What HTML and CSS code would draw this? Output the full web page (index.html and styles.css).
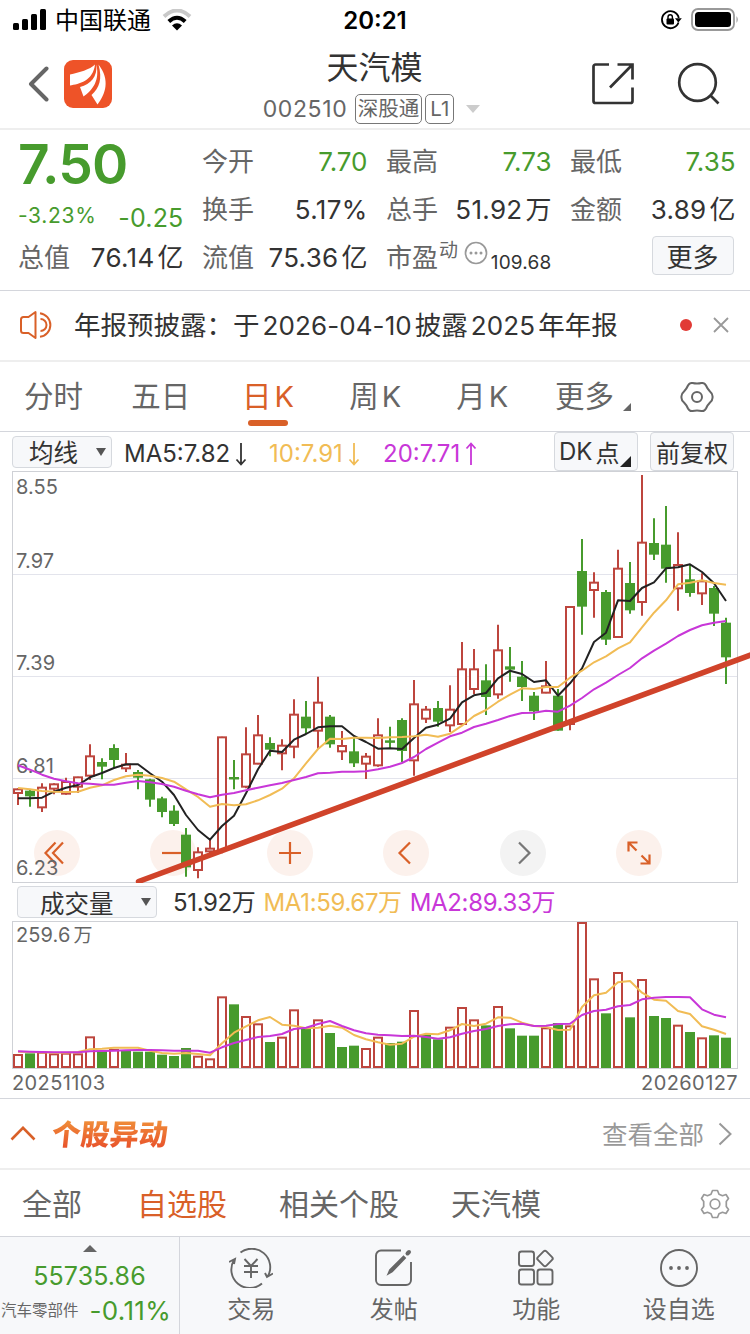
FILE: index.html
```html
<!DOCTYPE html>
<html lang="zh-CN">
<head>
    <meta charset="UTF-8">
    <meta name="viewport" content="width=device-width, initial-scale=1.0">
    <title>天汽模 002510</title>
    <link rel="stylesheet" href="styles.css">
</head>
<body>

    <!-- Status Bar -->
    <div class="status-bar">
        <div class="status-left">
            <svg width="34" height="22" viewBox="0 0 34 22">
                <rect x="0" y="14" width="6" height="7" rx="1.5"/>
                <rect x="9" y="10" width="6" height="11" rx="1.5"/>
                <rect x="18" y="5" width="6" height="16" rx="1.5"/>
                <rect x="27" y="0" width="6" height="21" rx="1.5"/>
            </svg>
            <span class="carrier">中国联通</span>
            <svg class="wifi" width="30" height="22" viewBox="0 0 30 22">
                <path d="M2 7.5Q15-4.500 28 7.500" fill="none" stroke="#c9c9c9" stroke-width="4"/>
                <path d="M6.800 12.500Q15 5 23.200 12.500" fill="none" stroke="#000" stroke-width="4"/>
                <path d="M10 16.500Q15 12 20 16.500L15 21.500Z"/>
            </svg>
        </div>
        <div class="clock">20:21</div>
        <div class="status-right">
            <svg width="21" height="20" viewBox="0 0 21 20">
                <path d="M17.500 12.500A8.500 8.500 0 1 1 17.800 8" fill="none" stroke="#000" stroke-width="1.800"/>
                <path d="M14 8.300H20.800L17.300 12.500Z"/>
                <rect x="5.500" y="8.500" width="7.500" height="6" rx="1"/>
                <path d="M7 9V7a2.200 2.200 0 0 1 4.400 0V9" fill="none" stroke="#000" stroke-width="1.400"/>
            </svg>
            <svg width="49" height="24" viewBox="0 0 49 24">
                <rect x="1" y="1" width="42" height="21" rx="6" fill="none" stroke="#999" stroke-width="1.800"/>
                <rect x="4" y="4" width="36" height="15" rx="3.500"/>
                <path d="M45.500 8q2.500 3.500 0 7z" fill="#999"/>
            </svg>
        </div>
    </div>

    <!-- Header -->
    <header class="header">
        <div class="header-left">
            <svg width="22" height="36" viewBox="0 0 22 36" fill="none" stroke="#666" stroke-width="4" stroke-linecap="round" stroke-linejoin="round">
                <path d="M18.500 2.500L3 18 18.500 33.500"/>
            </svg>
            <svg class="logo" width="48" height="48" viewBox="0 0 48 48">
                <rect width="48" height="48" rx="9" fill="#ee5328"/>
                <path d="M31 4.500C26 9.500 15 12.500 6 14.500V25.500C15 24 29 21 31 4.500Z" fill="#fff"/>
                <path d="M32.300 4.500C33.500 17 27 24 16 27L19.500 36.500C29 30 36 20 32.300 4.500Z" fill="#fff"/>
                <path d="M34.500 4.500C38.500 19 35.500 28 27.500 35L33.500 44.500C41.500 34 46.500 20 34.500 4.500Z" fill="#fff"/>
            </svg>
        </div>
        <div class="header-title">
            <h1>天汽模</h1>
            <div class="header-sub">
                <span class="code">002510</span>
                <span class="badge badge-wide">深股通</span>
                <span class="badge">L1</span>
                <span class="arrow-down"></span>
            </div>
        </div>
        <div class="header-right">
            <svg width="44" height="44" viewBox="0 0 44 44" fill="none" stroke="#333" stroke-width="2.700">
                <path d="M18 2.500H4.500a2 2 0 0 0-2 2V39a2 2 0 0 0 2 2H39.500a2 2 0 0 0 2-2V25.500"/>
                <path d="M26.500 2.500H41.500V17.500M41 3L19 25.500"/>
            </svg>
            <svg width="44" height="44" viewBox="0 0 44 44" fill="none" stroke="#333" stroke-width="2.700">
                <circle cx="20.500" cy="20.500" r="18.300"/>
                <path d="M33.500 33.500L41.500 41.500"/>
            </svg>
        </div>
    </header>

    <!-- Quote -->
    <section class="quote">
        <div class="price-box">
            <div class="price">7.50</div>
            <div class="change"><span class="percent">-3.23%</span><span class="diff">-0.25</span></div>
        </div>
        <div class="item"><label>今开</label><b class="green">7.70</b></div>
        <div class="item"><label>最高</label><b class="green">7.73</b></div>
        <div class="item"><label>最低</label><b class="green">7.35</b></div>
        <div class="item"><label>换手</label><b>5.17%</b></div>
        <div class="item"><label>总手</label><b>51.92<i>万</i></b></div>
        <div class="item"><label>金额</label><b>3.89<i>亿</i></b></div>
        <div class="item"><label>总值</label><b>76.14<i>亿</i></b></div>
        <div class="item"><label>流值</label><b>75.36<i>亿</i></b></div>
        <div class="item pe">
            <label>市盈</label><small>动</small>
            <svg width="24" height="24" viewBox="-12 -12 24 24">
                <circle r="10.500" fill="none" stroke="#999" stroke-width="1.700"/>
                <g fill="#999"><circle cx="-5" r="1.500"/><circle r="1.500"/><circle cx="5" r="1.500"/></g>
            </svg>
            <b>109.68</b>
        </div>
        <div class="item more-cell"><button class="more">更多</button></div>
    </section>

    <!-- Notice -->
    <section class="notice">
        <svg width="34" height="30" viewBox="0 0 34 30" fill="none" stroke="#d96028" stroke-width="2" stroke-linejoin="round">
            <path d="M16.500 2V28L9.500 23H4.500q-2.500 0-2.500-2.500V9.500q0-2.500 2.500-2.500H9.500Z"/>
            <path d="M21.500 9a6 6 0 0 1 0 12M21 3.200a11.900 11.900 0 0 1 0 23.600"/>
        </svg>
        <p>年报预披露：<span>于</span><em>2026-04-10</em>披露<em>2025</em>年年报</p>
        <span class="dot"></span>
        <svg width="16" height="16" viewBox="0 0 16 16" stroke="#999" stroke-width="1.800"><path d="M1 1L15 15M15 1L1 15"/></svg>
    </section>

    <!-- Period Tabs -->
    <nav class="period-tabs">
        <a>分时</a>
        <a>五日</a>
        <a class="active">日<em>K</em></a>
        <a>周<em>K</em></a>
        <a>月<em>K</em></a>
        <a class="more-tab">更多<span class="corner"></span></a>
        <a>
            <svg width="34" height="34" viewBox="-17 -17 34 34" fill="none" stroke="#666" stroke-width="2" stroke-linejoin="round">
                <path d="M-4.500-14Q0-13 4.500-14Q7.500-14.500 9-11.500Q10.500-8 13-5.500Q16-3 15.500 0Q16 3 13 5.500Q10.500 8 9 11.500Q7.500 14.500 4.500 14Q0 13-4.500 14Q-7.500 14.500-9 11.500Q-10.500 8-13 5.500Q-16 3-15.500 0Q-16-3-13-5.500Q-10.500-8-9-11.500Q-7.500-14.500-4.500-14Z"/>
                <circle r="5"/>
            </svg>
        </a>
    </nav>

    <!-- Moving Averages -->
    <div class="ma-bar">
        <button class="select">均线<span class="caret"></span></button>
        <span class="ma ma5">MA5:7.82<svg width="12" height="24" viewBox="0 0 12 24"><path d="M6 1V22.500M1.500 17.500L6 22.500 10.500 17.500"/></svg></span>
        <span class="ma ma10">10:7.91<svg width="12" height="24" viewBox="0 0 12 24"><path d="M6 1V22.500M1.500 17.500L6 22.500 10.500 17.500"/></svg></span>
        <span class="ma ma20">20:7.71<svg width="12" height="24" viewBox="0 0 12 24"><path d="M6 23V1.500M1.500 6.500L6 1.500 10.500 6.500"/></svg></span>
        <button class="dk">DK<i>点</i><span class="corner dark"></span></button>
        <button class="fq">前复权</button>
    </div>

    <!-- Candle Chart -->
    <div class="chart">
        <div class="controls">
            <span><svg viewBox="-23 -23 46 46"><path d="M-1.500-10.500L-11.500 0-1.500 10.500M6-10.500L-4 0 6 10.500"/></svg></span>
            <span><svg viewBox="-23 -23 46 46"><path d="M-11 0H11"/></svg></span>
            <span><svg viewBox="-23 -23 46 46"><path d="M-11 0H11M0-11V11"/></svg></span>
            <span><svg viewBox="-23 -23 46 46"><path d="M4-10.500L-6.500 0 4 10.500"/></svg></span>
            <span class="off"><svg viewBox="-23 -23 46 46"><path d="M-4-10.500L6.500 0-4 10.500"/></svg></span>
            <span><svg viewBox="-23 -23 46 46"><path d="M-10.500-1.500V-10.500H-1.500M-10.500-10.500L-2.500-2.500M10.500 1.500V10.500H1.500M10.500 10.500L2.500 2.500"/></svg></span>
        </div>
        <svg id="candles" width="750" height="412"></svg>
    </div>

    <!-- Volume Chart -->
    <div class="vol-bar">
        <button class="select">成交量<span class="caret"></span></button>
        <span class="vol">51.92万</span>
        <span class="vol ma10">MA1:59.67万</span>
        <span class="vol ma20">MA2:89.33万</span>
    </div>
    <svg id="volume" width="750" height="148"></svg>
    <div class="dates"><span>20251103</span><span>20260127</span></div>

    <!-- Stock Moves -->
    <section class="moves">
        <svg width="26" height="16" viewBox="0 0 26 16" fill="none" stroke="#d96028" stroke-width="2.600"><path d="M1.500 13.500L13 1.800 24.500 13.500"/></svg>
        <h2>个股异动</h2>
        <a>查看全部</a>
        <svg width="14" height="24" viewBox="0 0 14 24" fill="none" stroke="#999" stroke-width="2"><path d="M1.500 1.500L12.500 12 1.500 22.500"/></svg>
    </section>
    <nav class="move-tabs">
        <a>全部</a>
        <a class="active">自选股</a>
        <a>相关个股</a>
        <a>天汽模</a>
        <svg width="30" height="30" viewBox="-15 -15 30 30" fill="none" stroke="#999" stroke-width="1.700" stroke-linejoin="round">
            <path d="M-2.500-13.500H2.500L4-9.800 7.500-8.300 11-9.500 13.500-5.500 11.300-2.500V2.500L13.500 5.500 11 9.500 7.500 8.300 4 9.800 2.500 13.500H-2.500L-4 9.800-7.500 8.300-11 9.500-13.500 5.500-11.300 2.500V-2.500L-13.500-5.500-11-9.500-7.500-8.300-4-9.800Z"/>
            <circle r="4.800"/>
        </svg>
    </nav>

    <!-- Bottom Bar -->
    <footer class="bottom-bar">
        <div class="index">
            <span class="arrow-up"></span>
            <div class="index-value">55735.86</div>
            <div class="index-row"><span>汽车零部件</span><b>-0.11%</b></div>
        </div>
        <a>
            <svg width="44" height="40" viewBox="-22 -20 44 40" fill="none" stroke="#666" stroke-width="1.900">
                <path d="M-10.500-15.500A18.500 18.500 0 0 1 17 8M22 5.500L16 9 14 5M11 15.500A18.500 18.500 0 0 1-17-8M-22-6L-16-9-17-4"/>
                <path d="M-6.500-9L0-2 6.500-9M0-2V10M-7-2H7M-7 4H7"/>
            </svg>
            交易
        </a>
        <a>
            <svg width="40" height="40" viewBox="0 0 40 40" fill="none" stroke="#666" stroke-width="1.900">
                <path d="M27 2.500H7a5 5 0 0 0-5 5V32a5 5 0 0 0 5 5H32a5 5 0 0 0 5-5V14"/>
                <path d="M14.500 25.500L16 22 29.500 8.500 31 10 18 23.500Z" fill="#666"/>
                <path d="M33.500 5.500L35 4" stroke-width="4" stroke-linecap="round"/>
            </svg>
            发帖
        </a>
        <a>
            <svg width="38" height="40" viewBox="0 0 38 40" fill="none" stroke="#666" stroke-width="1.900">
                <rect x="2" y="3.500" width="15" height="14.500" rx="2.500"/>
                <rect x="2" y="21.500" width="15" height="15" rx="2.500"/>
                <rect x="20.500" y="21.500" width="15" height="15" rx="2.500"/>
                <rect x="22" y="4.500" width="12" height="12" rx="2" transform="rotate(45 28 10.500)"/>
            </svg>
            功能
        </a>
        <a>
            <svg width="40" height="40" viewBox="-20 -20 40 40">
                <circle r="18" fill="none" stroke="#666" stroke-width="1.900"/>
                <g fill="#666"><circle cx="-8" r="1.900"/><circle r="1.900"/><circle cx="8" r="1.900"/></g>
            </svg>
            设自选
        </a>
    </footer>

    <script src="chart.js"></script>
</body>
</html>
```
FILE: styles.css
```css
/* Body Styling */
* {
    box-sizing: border-box;
}

body {
    margin: 0;
    width: 750px;
    height: 1334px;
    overflow: hidden;
    background-color: #fff;
    color: #333;
    font-family: Inter, "Noto Sans CJK SC", sans-serif;
    font-weight: 400;
    line-height: 1;
}

h1, h2, p {
    margin: 0;
    font-weight: inherit;
}

b, i, em {
    font-weight: inherit;
    font-style: normal;
}

button {
    display: flex;
    align-items: center;
    padding: 0;
    font-family: inherit;
    font-weight: inherit;
    color: #333;
    background-color: #f7f8fa;
    border: 1px solid #d6d9de;
    border-radius: 4px;
}

svg {
    display: block;
    flex: none;
}

a, span, label, b {
    white-space: nowrap;
}

.green {
    color: #479b2d;
}

/* Status Bar */
.status-bar {
    display: grid;
    grid-template-columns: 1fr auto 1fr;
    align-items: center;
    height: 40px;
    padding: 0 10px 0 13px;
    color: #000;
}

.status-left {
    display: flex;
    align-items: center;
}

.carrier {
    margin-left: 8px;
    padding-top: 2px;
    font-size: 24px;
}

.wifi {
    margin-left: 11px;
}

.clock {
    padding: 2px 3px 0 0;
    font-size: 24px;
    font-weight: 600;
}

.status-right {
    display: flex;
    justify-content: flex-end;
    align-items: center;
    gap: 9px;
}

/* Header */
.header {
    display: grid;
    grid-template-columns: 1fr auto 1fr;
    height: 90px;
    padding: 0 29px 0 28px;
    border-bottom: 2px solid #eee;
}

.header-left {
    display: flex;
    align-items: center;
    gap: 14px;
    height: 88px;
}

.header-title h1 {
    margin-top: 12px;
    text-align: center;
    font-size: 32px;
}

.header-sub {
    display: flex;
    align-items: center;
    height: 30px;
    margin: 10px 3px 0 -3px;
    color: #666;
}

.code {
    width: 86px;
    font-size: 23px;
    letter-spacing: 0.6px;
}

.badge {
    height: 30px;
    margin-left: 3px;
    padding: 0 2px;
    border: 1px solid #777;
    border-radius: 5px;
    font-size: 20.500px;
    line-height: 28px;
}

.badge:not(.badge-wide) {
    width: 29px;
    text-align: center;
}

.badge-wide {
    margin-left: 6px;
}

.arrow-down {
    margin-left: 12px;
    border: 7px solid transparent;
    border-top: 8px solid #ccc;
    border-bottom: 0;
}

.header-right {
    display: flex;
    align-items: center;
    justify-content: flex-end;
    gap: 42px;
    height: 88px;
}

/* Quote */
.quote {
    display: grid;
    grid-template-columns: repeat(4, 165.500px);
    grid-template-rows: repeat(3, 48px);
    column-gap: 18.500px;
    height: 161px;
    padding: 8px 0 0 18px;
    border-bottom: 1px solid #d4d6dc;
}

.price-box {
    grid-row: span 2;
    color: #479b2d;
}

.price {
    margin-top: -1px;
    font-size: 55px;
    font-weight: 600;
    letter-spacing: -0.8px;
}

.change {
    display: flex;
    justify-content: space-between;
    align-items: flex-end;
    margin-top: 8px;
}

.percent {
    font-size: 21px;
    line-height: 31px;
    letter-spacing: 0.7px;
}

.diff {
    font-size: 25px;
    letter-spacing: 0.2px;
}

.item {
    display: flex;
    justify-content: space-between;
    align-items: center;
}

.item label {
    font-size: 26px;
    color: #666;
}

.item b {
    font-size: 26px;
    letter-spacing: 0.3px;
}

.item b i {
    margin-left: 3px;
    font-size: 26px;
    letter-spacing: 0;
}

.item .green {
    letter-spacing: 0;
}

.pe small {
    margin: -16px 0 0 1px;
    font-size: 19px;
    color: #666;
}

.pe svg {
    margin: -11px 0 0 6px;
}

.pe b {
    margin: 9px 0 0 auto;
    font-size: 19px;
    letter-spacing: 0.2px;
}

.more-cell {
    justify-content: flex-end;
}

.more {
    justify-content: center;
    width: 82px;
    height: 39px;
    margin: -5px 2px 0 0;
    font-size: 26px;
}

/* Notice */
.notice {
    display: flex;
    align-items: center;
    height: 71px;
    padding: 0 21px 2px 19px;
    border-bottom: 2px solid #eee;
}

.notice p {
    flex: 1;
    margin-left: 21px;
    padding-top: 1px;
    font-size: 26.500px;
    white-space: nowrap;
}

.notice em {
    margin: 0 3px;
    font-size: 26px;
    letter-spacing: 0.1px;
}

.dot {
    width: 12px;
    height: 12px;
    margin-right: 21px;
    border-radius: 50%;
    background-color: #e13a35;
}

/* Period Tabs */
.period-tabs {
    display: grid;
    grid-template-columns: repeat(7, 107.200px);
    height: 70px;
    border-bottom: 1px solid #d4d6dc;
}

.period-tabs a {
    position: relative;
    display: flex;
    align-items: center;
    justify-content: center;
    font-size: 29.500px;
    color: #666;
}

.period-tabs em {
    margin-left: 3px;
    font-size: 29px;
}

.period-tabs .active {
    color: #d96028;
}

.period-tabs .active::after {
    content: "";
    position: absolute;
    bottom: 5px;
    width: 40px;
    height: 6px;
    border-radius: 3px;
    background-color: #d96028;
}

.period-tabs .more-tab {
    padding-left: 7px;
}

.corner {
    align-self: flex-end;
    margin: 0 0 20px 9px;
    border-left: 8px solid transparent;
    border-bottom: 8px solid #666;
}

/* Moving Averages */
.ma-bar {
    display: flex;
    align-items: center;
    height: 39px;
    padding: 0 16px 0 12px;
}

.select {
    justify-content: space-between;
    width: 100px;
    height: 32px;
    padding: 0 5px 0 16px;
    font-size: 24.500px;
}

.caret {
    border: 5px solid transparent;
    border-top: 8px solid #555;
    border-bottom: 0;
}

.ma {
    display: flex;
    align-items: center;
    gap: 5px;
    font-size: 24px;
    padding-top: 4px;
}

.ma path {
    fill: none;
    stroke: currentColor;
    stroke-width: 1.800;
}

.ma5 {
    width: 145px;
    margin-left: 12px;
}

.ma10 {
    color: #f1bc55;
}

.ma.ma10 {
    width: 114px;
}

.ma20 {
    color: #c837d8;
}

.dk,
.fq {
    justify-content: center;
    height: 39px;
    width: 84px;
    font-size: 24px;
}

.dk {
    justify-content: flex-start;
    margin-left: auto;
    padding-left: 4px;
}

.dk i {
    margin-left: 3px;
}

.corner.dark {
    margin: 0 0 3px 1px;
    border-left-width: 11px;
    border-bottom: 11px solid #222;
}

.fq {
    margin-left: 12px;
}

/* Charts */
.chart {
    position: relative;
    height: 412px;
}

.controls {
    position: absolute;
    left: 34px;
    bottom: 7px;
    display: flex;
    gap: 70.400px;
}

.controls span {
    width: 46px;
    height: 46px;
    border-radius: 50%;
    background-color: #fcf1ec;
}

.controls path {
    fill: none;
    stroke: #d96028;
    stroke-width: 2.200;
}

.controls .off {
    background-color: #f3f3f3;
}

.controls .off path {
    stroke: #777;
}

#candles {
    position: relative;
}

.frame {
    fill: none;
    stroke: #cfd1d6;
}

.grid {
    stroke: #e3e4ec;
}

.axis {
    font-size: 20px;
    letter-spacing: 0.1px;
    fill: #666;
}

.up {
    fill: #fff;
    stroke: #bd453d;
    stroke-width: 2;
}

.down {
    fill: #479b2d;
    stroke: #479b2d;
    stroke-width: 2;
}

.line {
    fill: none;
    stroke-width: 2;
    stroke-linejoin: round;
}

.trend {
    stroke: #d0432a;
    stroke-width: 5.500;
    stroke-linecap: round;
}

.vol-bar {
    display: flex;
    align-items: center;
    height: 38px;
    padding-left: 17px;
}

.vol-bar .select {
    width: 140px;
    padding-left: 22px;
}

.vol {
    margin-left: 8px;
    padding-top: 1px;
    font-size: 24px;
    letter-spacing: -0.350px;
}

.select + .vol {
    margin-left: 16px;
}

.dates {
    display: flex;
    justify-content: space-between;
    height: 30px;
    padding: 4px 12px 0 12px;
    border-bottom: 1px solid #d4d6dc;
    font-size: 20px;
    letter-spacing: 0.4px;
    color: #666;
}

/* Stock Moves */
.moves {
    display: flex;
    align-items: center;
    height: 71px;
    padding: 0 18px 0 10px;
    border-bottom: 2px solid #eee;
}

.moves h2 {
    margin-left: 16px;
    padding-top: 1px;
    font-size: 29px;
    font-weight: 900;
    color: transparent;
    background: linear-gradient(#f0913a, #e8502a);
    -webkit-background-clip: text;
    background-clip: text;
    transform: skewX(-6deg);
}

.moves a {
    margin: 0 14px 0 auto;
    padding-top: 2px;
    font-size: 25.500px;
    color: #999;
}

.move-tabs {
    display: flex;
    align-items: center;
    gap: 52px;
    height: 67px;
    padding: 2px 20px 0 22px;
    border-bottom: 1px solid #d4d6dc;
    font-size: 30px;
    color: #666;
}

.move-tabs .active {
    margin-left: 3px;
    color: #d96028;
}

.move-tabs svg {
    margin-left: auto;
}

/* Bottom Bar */
.bottom-bar {
    display: flex;
    height: 97px;
    background-color: #f7f8fa;
}

.index {
    width: 180px;
    border-right: 1px solid #d4d6dc;
    color: #479b2d;
    text-align: center;
}

.arrow-up {
    display: block;
    width: 14px;
    margin: 8px auto 0;
    border: 7px solid transparent;
    border-bottom: 7px solid #666;
    border-top: 0;
}

.index-value {
    margin-top: 12px;
    font-size: 25px;
    letter-spacing: 0.1px;
}

.index-row {
    display: flex;
    align-items: center;
    justify-content: space-between;
    margin-top: 9px;
    padding: 0 8px 0 1px;
}

.index-row span {
    font-size: 15.500px;
    color: #666;
}

.index-row b {
    font-size: 26px;
    letter-spacing: 0.3px;
}

.bottom-bar a {
    flex: 1;
    display: flex;
    flex-direction: column;
    align-items: center;
    gap: 10px;
    padding-top: 11px;
    font-size: 24px;
    color: #666;
}
```
FILE: chart.js
```js
// All y values are in thirds of a pixel, one entry per trading day.
// Candles: [rising, high, body top, body bottom, low]
const candles = [
    [1,1075,1078,1089,1125],[0,1080,1082,1099,1130],[1,1060,1073,1132,1146],[1,1060,1063,1076,1093],
    [1,1043,1056,1091,1094],[1,1040,1042,1070,1089],[1,943,979,1037,1050],[0,985,996,1010,1048],
    [0,943,954,990,1013],[1,969,1004,1015,1026],[0,1020,1026,1043,1078],[0,1046,1048,1109,1130],
    [0,1100,1105,1146,1162],[0,1126,1142,1182,1188],[0,1194,1214,1312,1340],[1,1252,1267,1320,1345],
    [1,1230,1256,1264,1272],[1,920,922,1260,1270],[0,990,1041,1045,1078],[1,892,973,1070,1075],
    [1,855,916,1001,1003],[0,922,939,959,979],[1,928,947,970,1021],[1,808,854,950,985],
    [0,813,860,895,912],[1,740,818,902,956],[0,855,860,943,953],[1,903,948,964,990],
    [0,920,964,1000,1011],[1,969,980,1001,1047],[1,865,916,1006,1010],[0,890,931,935,955],
    [0,865,870,963,996],[1,750,823,991,1037],[1,828,839,866,879],[0,813,834,875,890],
    [1,766,839,886,906],[1,636,718,882,884],[1,657,718,777,793],[0,703,751,801,855],
    [1,584,661,793,806],[0,651,709,719,755],[0,693,740,771,813],[0,786,797,844,870],
    [1,693,769,788,790],[0,777,797,902,902],[1,530,531,882,901],[0,327,423,530,614],
    [1,427,458,480,563],[0,480,486,629,645],[1,359,416,621,623],[0,396,459,541,551],
    [1,135,338,516,557],[0,265,339,374,390],[0,228,344,416,458],[1,307,405,475,542],
    [0,405,448,489,500],[1,430,454,490,525],[0,468,474,551,588],[0,563,578,682,762]
];
const ma5 = [1105,1105,1103,1085,1073,1065,1042,1029,1014,1003,1003,1030,1055,1095,1155,1200,1229,1188,1157,1090,1018,962,966,929,912,892,889,889,918,936,956,955,957,924,893,884,866,817,796,789,745,722,732,756,751,797,760,715,636,608,511,513,474,457,415,412,403,426,460,513];
const ma10 = [1074,1078,1083,1085,1086,1085,1073,1066,1050,1039,1034,1037,1044,1055,1078,1101,1130,1122,1126,1123,1111,1095,1076,1045,1000,957,926,927,923,923,924,922,921,919,914,920,911,887,858,840,815,794,775,777,771,771,743,722,697,679,655,637,592,548,511,463,458,451,459,464];
const ma20 = [1006,1019,1034,1046,1054,1060,1061,1064,1064,1058,1053,1057,1062,1070,1082,1093,1102,1094,1089,1081,1073,1066,1059,1050,1041,1030,1028,1025,1025,1024,1018,1010,999,981,957,938,919,908,891,881,870,858,849,848,842,845,827,804,778,758,735,714,685,662,641,618,600,586,578,573];

// Volume: [rising, bar top]
const volumes = [
    [1,507],[0,505],[1,500],[1,505],[1,503],[1,505],[1,454],[0,498],[1,492],[0,497],
    [0,500],[0,500],[0,509],[0,513],[0,489],[1,512],[1,520],[1,334],[0,358],[1,393],
    [1,415],[0,471],[1,455],[1,373],[0,429],[1,403],[0,444],[0,486],[0,482],[1,489],
    [1,455],[0,474],[0,470],[1,375],[0,450],[0,463],[1,425],[1,366],[1,403],[0,421],
    [1,363],[0,430],[0,452],[0,452],[1,427],[0,414],[1,421],[1,111],[1,280],[0,385],
    [1,261],[0,397],[1,282],[0,393],[0,399],[1,419],[0,441],[1,457],[0,451],[0,458]
];
const volMa1 = [500,501,502,503,503,501,493,491,488,488,488,497,504,506,504,507,511,475,443,424,406,396,419,422,430,428,422,428,450,463,472,479,476,455,446,448,436,417,423,416,397,398,413,423,426,435,434,366,331,323,292,288,323,344,347,378,387,424,434,447];
const volMa2 = [499,500,501,502,502,502,499,498,497,496,495,495,496,497,497,497,503,487,474,465,456,453,447,432,428,417,408,423,436,445,449,451,453,452,456,461,457,446,438,432,423,418,416,423,422,417,416,390,378,374,364,360,343,338,336,336,337,373,389,397];

const dayX = i => 18 + i * 12;

function box(rising, x, top, bottom) {
    const height = Math.max(bottom - top, 0.5);
    return `<rect class="${rising ? 'up' : 'down'}" x="${x - 4}" y="${top}" width="8" height="${height}"/>`;
}

function line(values, y, color) {
    const points = values.map((v, i) => `${dayX(i)},${y(v).toFixed(1)}`).join(' ');
    return `<polyline class="line" stroke="${color}" points="${points}"/>`;
}

function drawCandles() {
    const y = v => (v - 123) / 3;
    let out = '<rect class="frame" x="12.5" y="0.5" width="725" height="411"/>';
    [103.5, 205.5, 307.5].forEach(g => {
        out += `<path class="grid" d="M13 ${g}H737"/>`;
    });
    [['8.55', 23], ['7.97', 97], ['7.39', 199], ['6.81', 302], ['6.23', 404]].forEach(([text, pos]) => {
        out += `<text class="axis" x="16" y="${pos}">${text}</text>`;
    });
    candles.forEach(([rising, high, top, bottom, low], i) => {
        const x = dayX(i);
        out += `<path class="${rising ? 'up' : 'down'}" d="M${x} ${y(high)}V${y(low)}"/>`;
        out += rising ? box(1, x, y(top), y(bottom)) : box(0, x, y(top) + 1, y(bottom) - 1);
    });
    out += line(ma5, y, '#222') + line(ma10, y, '#f1bc55') + line(ma20, y, '#c837d8');
    out += '<path class="trend" d="M138.500 410.500L752 183.500"/>';
    document.getElementById('candles').innerHTML = out;
}

function drawVolume() {
    const y = v => (v - 108) / 3;
    let out = '<rect class="frame" x="12.5" y="0.5" width="725" height="147"/>';
    out += '<text class="axis" x="16" y="21">259.6<tspan dx="3" font-size="19">万</tspan></text>';
    volumes.forEach(([rising, top], i) => {
        out += box(rising, dayX(i), y(top) + 1, 146);
    });
    out += line(volMa1, y, '#f1bc55') + line(volMa2, y, '#c837d8');
    document.getElementById('volume').innerHTML = out;
}

drawCandles();
drawVolume();
```
